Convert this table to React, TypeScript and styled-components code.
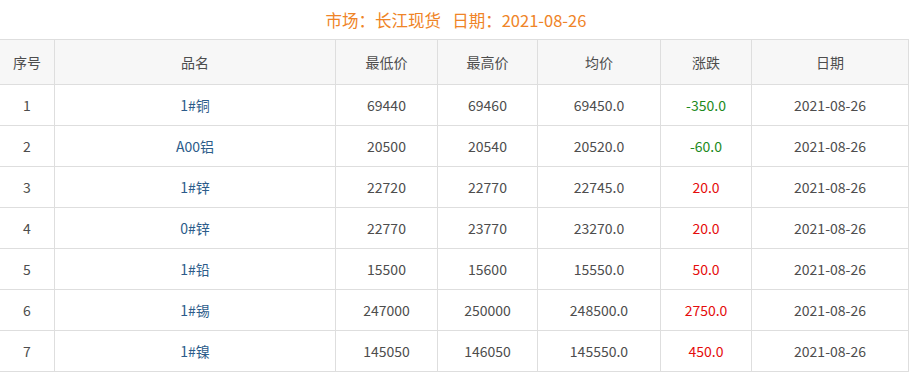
import React from "react";
import styled, { createGlobalStyle } from "styled-components";

const Global = createGlobalStyle`
  html, body { margin: 0; padding: 0; background: #fff; }
  body { font-family: "Noto Sans CJK SC", "Noto Sans", sans-serif; }
`;

const Page = styled.div`
  width: 910px;
`;

const Title = styled.div`
  height: 39px;
  display: flex;
  align-items: center;
  justify-content: center;
  color: #ef8427;
  font-size: 16.5px;
  white-space: pre;
  padding-left: 2px;
  box-sizing: border-box;
`;

const Grid = styled.div`
  display: grid;
  grid-template-columns: 55px 281px 102px 100px 123px 91px 157px;
  border-top: 1px solid #dedede;
  width: 909px;
`;

const Cell = styled.div<{ $head?: boolean; $color?: string }>`
  height: ${(p) => (p.$head ? "44px" : "40px")};
  display: flex;
  align-items: center;
  justify-content: center;
  border-right: 1px solid #dedede;
  border-bottom: 1px solid #dedede;
  background: ${(p) => (p.$head ? "#f7f7f7" : "#fff")};
  color: ${(p) => p.$color || "#4d4d4d"};
  font-size: 14px;
  white-space: nowrap;
`;

const heads = ["序号", "品名", "最低价", "最高价", "均价", "涨跌", "日期"];

const rows = [
  ["1", "1#铜", "69440", "69460", "69450.0", "-350.0"],
  ["2", "A00铝", "20500", "20540", "20520.0", "-60.0"],
  ["3", "1#锌", "22720", "22770", "22745.0", "20.0"],
  ["4", "0#锌", "22770", "23770", "23270.0", "20.0"],
  ["5", "1#铅", "15500", "15600", "15550.0", "50.0"],
  ["6", "1#锡", "247000", "250000", "248500.0", "2750.0"],
  ["7", "1#镍", "145050", "146050", "145550.0", "450.0"],
];

export default function App() {
  return (
    <Page>
      <Global />
      <Title>{"市场：长江现货   日期：2021-08-26"}</Title>
      <Grid>
        {heads.map((h) => (
          <Cell $head key={h}>
            {h}
          </Cell>
        ))}
        {rows.map((r) => (
          <React.Fragment key={r[0]}>
            <Cell>{r[0]}</Cell>
            <Cell $color="#2c5c8a">{r[1]}</Cell>
            <Cell>{r[2]}</Cell>
            <Cell>{r[3]}</Cell>
            <Cell>{r[4]}</Cell>
            <Cell $color={r[5].startsWith("-") ? "#1d8a1d" : "#e50c0c"}>{r[5]}</Cell>
            <Cell>2021-08-26</Cell>
          </React.Fragment>
        ))}
      </Grid>
    </Page>
  );
}
